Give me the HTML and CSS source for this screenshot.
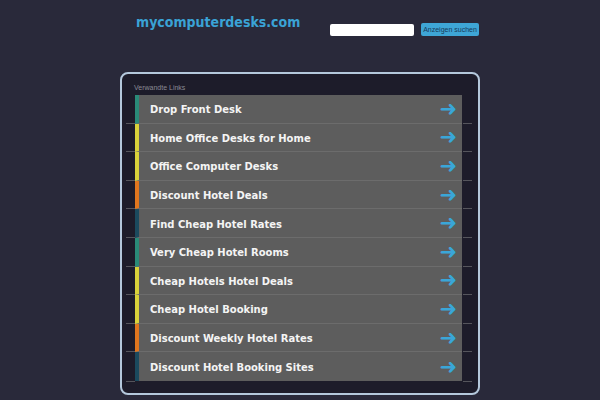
FILE: index.html
```html
<!DOCTYPE html>
<html>
<head>
<meta charset="utf-8">
<link rel="stylesheet" href="styles.css">
</head>
<body>
<div class="header">
  <div class="logo">mycomputerdesks.com</div>
  <form class="search">
    <input class="search-input" type="text">
    <button class="search-btn" type="button">Anzeigen suchen</button>
  </form>
</div>
<div class="panel">
  <div class="panel-title">Verwandte Links</div>
  <ul class="links">
    <li class="link c-teal"><span>Drop Front Desk</span><i class="arrow">&#10140;</i></li>
    <li class="link c-yellow"><span>Home Office Desks for Home</span><i class="arrow">&#10140;</i></li>
    <li class="link c-yellow"><span>Office Computer Desks</span><i class="arrow">&#10140;</i></li>
    <li class="link c-orange"><span>Discount Hotel Deals</span><i class="arrow">&#10140;</i></li>
    <li class="link c-dark"><span>Find Cheap Hotel Rates</span><i class="arrow">&#10140;</i></li>
    <li class="link c-teal"><span>Very Cheap Hotel Rooms</span><i class="arrow">&#10140;</i></li>
    <li class="link c-yellow"><span>Cheap Hotels Hotel Deals</span><i class="arrow">&#10140;</i></li>
    <li class="link c-yellow"><span>Cheap Hotel Booking</span><i class="arrow">&#10140;</i></li>
    <li class="link c-orange"><span>Discount Weekly Hotel Rates</span><i class="arrow">&#10140;</i></li>
    <li class="link c-dark"><span>Discount Hotel Booking Sites</span><i class="arrow">&#10140;</i></li>
  </ul>
</div>
</body>
</html>
```

FILE: styles.css
```css
html, body {
  margin: 0;
  padding: 0;
  background: #29293a;
  font-family: "DejaVu Sans Condensed", "DejaVu Sans", sans-serif;
}
.header {
  width: 344px;
  margin: 0 0 0 136px;
  height: 72px;
  display: flex;
  align-items: flex-start;
  justify-content: space-between;
}
.logo {
  color: #3aa3d6;
  font-weight: bold;
  font-size: 14px;
  margin-top: 14px;
}
.search {
  display: flex;
  align-items: center;
  gap: 7px;
  margin: 23px 1px 0 0;
}
.search-input {
  width: 84px;
  height: 12px;
  border: none;
  border-radius: 2px;
  padding: 0;
  background: #fff;
}
.search-btn {
  height: 13px;
  width: 58px;
  padding: 0;
  border: none;
  border-radius: 2px;
  background: #3ea6d6;
  color: #173a5a;
  font-family: "Liberation Sans", sans-serif;
  font-size: 7px;
}
.panel {
  width: 356px;
  height: 319px;
  margin-left: 120px;
  border: 2px solid #b4c8dc;
  border-radius: 8px;
  background: #1d1c2a;
  box-sizing: content-box;
}
.panel-title {
  color: #8a8a94;
  font-family: "Liberation Sans", sans-serif;
  font-size: 7px;
  padding: 10px 0 0 12px;
  height: 11px;
}
.links {
  list-style: none;
  margin: 0;
  padding: 0 0 0 13px;
}
.link {
  position: relative;
  width: 327px;
  height: 28.6px;
  box-sizing: border-box;
  background: #5d5d5d;
  border-left: 4px solid #2a8a78;
  border-bottom: 1px solid #6c6c6c;
  display: flex;
  align-items: center;
  justify-content: space-between;
  padding: 2px 5px 0 11px;
  color: #f4f4f4;
  font-weight: bold;
  font-size: 11.1px;
}
.link:last-child { border-bottom: none; }
.link::before, .link::after {
  content: "";
  position: absolute;
  bottom: -1px;
  height: 1px;
  width: 9px;
  background: #55555c;
}
.link::before { left: -13px; }
.link::after { right: -10px; }
.c-teal { border-left-color: #2a8a78; }
.c-yellow { border-left-color: #d9d23a; }
.c-orange { border-left-color: #e0761e; }
.c-dark { border-left-color: #1b4a5e; }
.arrow {
  font-style: normal;
  color: #3aa6d8;
  font-size: 21px;
  font-weight: bold;
  margin-top: -2px;
  font-family: "DejaVu Sans", sans-serif;
}
```
